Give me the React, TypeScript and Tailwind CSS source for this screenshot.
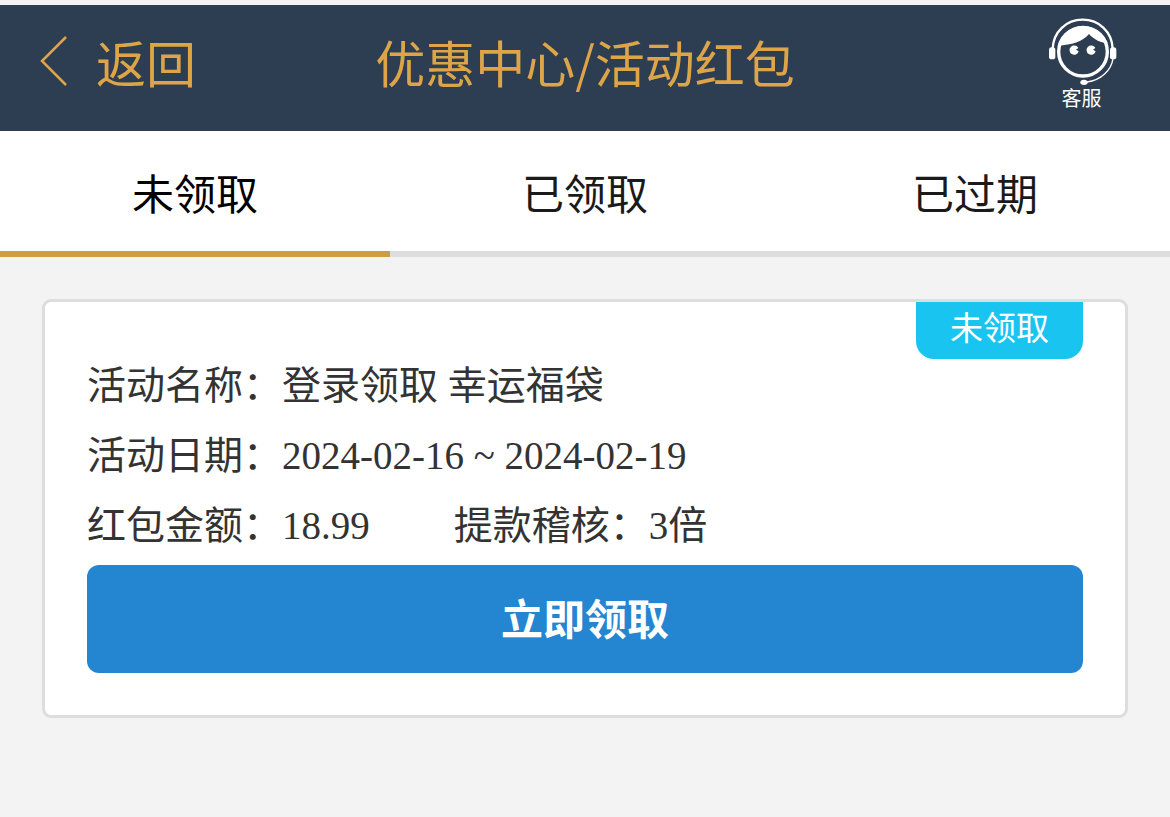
import { useState } from 'react';

const tabs = [
  { id: 'pending', label: '未领取' },
  { id: 'claimed', label: '已领取' },
  { id: 'expired', label: '已过期' },
];

function ServiceIcon() {
  return (
    <svg viewBox="52 54 216 204" className="h-[68px] w-[72px]" fill="none" aria-hidden="true">
      {/* Headband */}
      <path d="M69 146C71 95 110 59 159 59s88 36 90 87" stroke="#fff" strokeWidth="7" />
      {/* Ear pads */}
      <rect x="58" y="142" width="19" height="36" rx="8" fill="#fff" />
      <rect x="241" y="142" width="19" height="36" rx="8" fill="#fff" />
      {/* Face and hair */}
      <circle cx="160" cy="155" r="73" stroke="#fff" strokeWidth="10" />
      <path d="M85 137C94 103 124 79 160 79c35 0 64 22 74 51-22-2-42-12-56-28-20 24-52 32-93 35z" fill="#fff" />
      {/* Eyes */}
      <path d="M146 144l-7 5 8 5a14 14 0 1 1-1-10z" fill="#fff" />
      <path d="M197 144l-7 5 8 5a14 14 0 1 1-1-10z" fill="#fff" />
      {/* Microphone */}
      <path d="M250 176c-5 35-36 64-78 70" stroke="#fff" strokeWidth="4" />
      <ellipse cx="163" cy="247" rx="11" ry="8" fill="#fff" />
    </svg>
  );
}

function Header() {
  return (
    <header className="grid h-[126px] grid-cols-[1fr_auto_1fr] items-center bg-[#2d3e53] pb-[14px] text-[50px] leading-[60px] text-[#dda547]">
      <button type="button" className="flex items-center gap-[28px] justify-self-start pl-10">
        <svg viewBox="0 0 28 52" className="h-[52px] w-7" fill="none" aria-hidden="true">
          <path d="M26 2L2 26l24 24" stroke="currentColor" strokeWidth="2.5" />
        </svg>
        <span>返回</span>
      </button>
      <h1>优惠中心/活动红包</h1>
      <a href="#service" className="mr-[51px] flex flex-col items-center justify-self-end pt-[6px] text-white">
        <ServiceIcon />
        <span className="pr-[3px] text-xl leading-6">客服</span>
      </a>
    </header>
  );
}

function PacketCard() {
  return (
    <article className="relative rounded-[9px] border-[3px] border-[#dddddd] bg-white px-[42px] pt-[49px] pb-[42px]">
      <span className="absolute top-0 right-[42px] rounded-b-[18px] bg-[#19c5f0] px-[34px] pb-[9px] text-[33px] leading-[48px] text-white">
        未领取
      </span>
      <div className="font-['Liberation_Serif','Noto_Sans_CJK_SC',serif] text-[39px] leading-[70px] text-[#333333]">
        <p>活动名称：登录领取 幸运福袋</p>
        <p>活动日期：2024-02-16 ~ 2024-02-19</p>
        <p className="flex flex-wrap gap-x-[84px]">
          <span>红包金额：18.99</span>
          <span>提款稽核：3倍</span>
        </p>
      </div>
      <button
        type="button"
        className="mt-1 h-[108px] w-full rounded-xl bg-[#2485d0] pb-[6px] text-[42px] font-bold text-white"
      >
        立即领取
      </button>
    </article>
  );
}

export default function App() {
  const [activeTab, setActiveTab] = useState('pending');

  return (
    <div
      lang="zh-CN"
      className="min-h-screen bg-[#f3f3f3] pt-[5px] font-['Noto_Sans_CJK_SC',sans-serif]"
    >
      <Header />
      <nav className="grid grid-cols-3 bg-white">
        {tabs.map((tab) => (
          <button
            key={tab.id}
            type="button"
            onClick={() => setActiveTab(tab.id)}
            className={`h-[126px] border-b-[6px] text-[42px] ${
              activeTab === tab.id ? 'border-[#cf9c40] text-black' : 'border-[#dddddd] text-[#1a1a1a]'
            }`}
          >
            {tab.label}
          </button>
        ))}
      </nav>
      <main className="p-[42px]">
        {activeTab === 'pending' && <PacketCard />}
      </main>
    </div>
  );
}
